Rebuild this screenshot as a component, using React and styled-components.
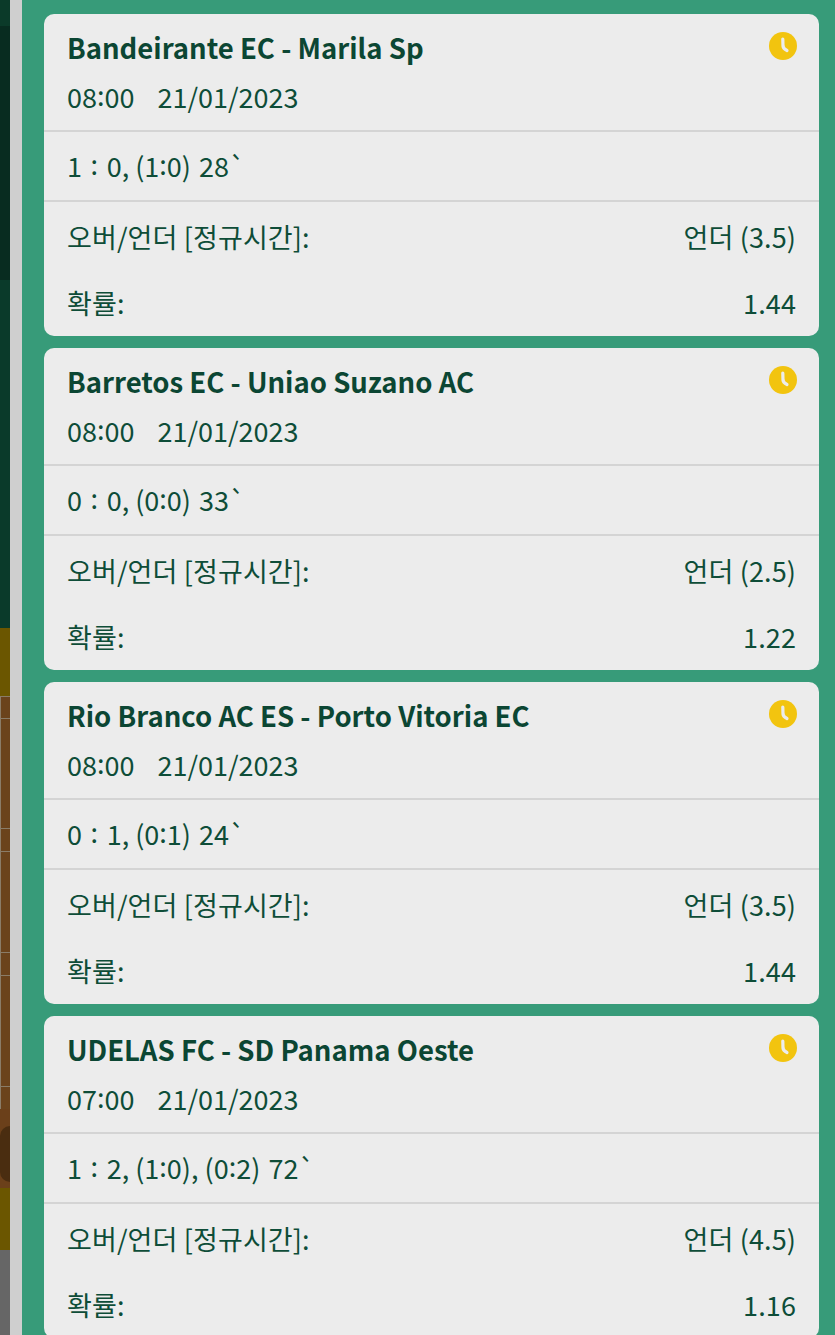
import React from "react";
import styled, { createGlobalStyle } from "styled-components";

const Global = createGlobalStyle`
html, body {
  margin: 0;
  padding: 0;
  background: #379b79;
}
body {
  font-family: "Noto Sans CJK KR", "Noto Sans", sans-serif;
}
`;

const Page = styled.div`
width: 835px;
height: 1335px;
overflow: hidden;
display: flex;
`;

const Behind = styled.div`
width: 10px;
flex: none;
display: flex;
flex-direction: column;
`;

const Band = styled.div`
height: ${p => p.$h}px;
flex: none;
background: ${p => p.$c};
`;

const Grid = styled.div`
flex: none;
background: #6b431c;
display: flex;
flex-direction: column;
`;

const GridRow = styled.div`
height: ${p => p.$h}px;
flex: none;
border-top: 1px solid #8a7c68;
border-left: 1px solid #8a7c68;
box-sizing: border-box;
`;

const Blob = styled.div`
height: 79px;
flex: none;
background: #6b401a;
display: flex;
align-items: center;
`;

const BlobShape = styled.div`
width: 10px;
height: 56px;
margin-top: 10px;
border-radius: 10px 0 0 10px;
background: #4a2d10;
`;

const Scrollbar = styled.div`
width: 12px;
flex: none;
background: #cfcfcf;
`;

const List = styled.div`
flex: 1;
padding: 14px 16px 0 22px;
display: flex;
flex-direction: column;
gap: 12px;
`;

const Card = styled.div`
flex: none;
height: 322px;
box-sizing: border-box;
background: #ececec;
border-radius: 10px;
color: #0e4d38;
display: flex;
flex-direction: column;
`;

const Head = styled.div`
height: 118px;
flex: none;
box-sizing: border-box;
padding: 15px 22px 0 23px;
border-bottom: 2px solid #d4d4d4;
position: relative;
`;

const Title = styled.div`
font-size: 27.5px;
line-height: 36px;
font-weight: 700;
color: #0b4633;
`;

const When = styled.div`
margin-top: 14px;
font-size: 27px;
line-height: 36px;
display: flex;
gap: 23px;
`;

const ClockIcon = styled.svg`
position: absolute;
top: 18px;
right: 22px;
width: 28px;
height: 28px;
`;

const Score = styled.div`
height: 70px;
flex: none;
box-sizing: border-box;
padding: 0 23px;
border-bottom: 2px solid #d4d4d4;
display: flex;
align-items: center;
font-size: 27px;
line-height: 36px;
white-space: pre;
`;

const Colon = styled.span`
line-height: 0;
vertical-align: 2px;
margin: 0 ${p => p.$wide ? 2.5 : 0}px;
`;

const Minute = styled.span`
margin-left: 2px;
`;

const Details = styled.div`
flex: 1;
padding: 16px 23px 0;
display: flex;
flex-direction: column;
gap: 30px;
`;

const Row = styled.div`
display: flex;
justify-content: space-between;
align-items: center;
height: 36px;
font-size: 27px;
letter-spacing: 0.12px;
`;

const matches = [
  { title: "Bandeirante EC - Marila Sp", time: ["08", "00"], goals: ["1", "0"], halves: [["1", "0"]], minute: "28`", line: "언더 (3.5)", odds: "1.44" },
  { title: "Barretos EC - Uniao Suzano AC", time: ["08", "00"], goals: ["0", "0"], halves: [["0", "0"]], minute: "33`", line: "언더 (2.5)", odds: "1.22" },
  { title: "Rio Branco AC ES - Porto Vitoria EC", time: ["08", "00"], goals: ["0", "1"], halves: [["0", "1"]], minute: "24`", line: "언더 (3.5)", odds: "1.44" },
  { title: "UDELAS FC - SD Panama Oeste", time: ["07", "00"], goals: ["1", "2"], halves: [["1", "0"], ["0", "2"]], minute: "72`", line: "언더 (4.5)", odds: "1.16" },
];

function Clock() {
  return (
    <ClockIcon viewBox="0 0 28 28">
      <circle cx="14" cy="14" r="14" fill="#f2c40f" />
      <path d="M13.8 7 L14 14 C14.2 16 16 17.5 18 18.5" fill="none" stroke="#ececec" strokeWidth="3.2" strokeLinecap="round" />
    </ClockIcon>
  );
}

function MatchCard({ m }) {
  return (
    <Card>
      <Head>
        <Title>{m.title}</Title>
        <When>
          <span>{m.time[0]}<Colon>:</Colon>{m.time[1]}</span>
          <span>21/01/2023</span>
        </When>
        <Clock />
      </Head>
      <Score>
        <span>
          {m.goals[0]} <Colon $wide>:</Colon> {m.goals[1]},
          {m.halves.map((h, i) => (
            <React.Fragment key={i}>
              {" ("}{h[0]}<Colon>:</Colon>{h[1]}{")"}{i < m.halves.length - 1 ? "," : ""}
            </React.Fragment>
          ))}
          {" "}<Minute>{m.minute}</Minute>
        </span>
      </Score>
      <Details>
        <Row>
          <span>오버/언더 [정규시간]:</span>
          <span>{m.line}</span>
        </Row>
        <Row>
          <span>확률:</span>
          <span>{m.odds}</span>
        </Row>
      </Details>
    </Card>
  );
}

export default function App() {
  return (
    <Page>
      <Global />
      <Behind>
        <Band $h={26} $c="#0b3a29" />
        <Band $h={254} $c="#082c20" />
        <Band $h={348} $c="#0a3a2a" />
        <Band $h={68} $c="#6b5600" />
        <Grid>
          <GridRow $h={22} />
          <GridRow $h={110} />
          <GridRow $h={23} />
          <GridRow $h={101} />
          <GridRow $h={23} />
          <GridRow $h={111} />
          <GridRow $h={23} />
        </Grid>
        <Blob><BlobShape /></Blob>
        <Band $h={62} $c="#6b5600" />
        <Band $h={85} $c="#666666" />
      </Behind>
      <Scrollbar />
      <List>
        {matches.map(m => <MatchCard key={m.title} m={m} />)}
      </List>
    </Page>
  );
}
